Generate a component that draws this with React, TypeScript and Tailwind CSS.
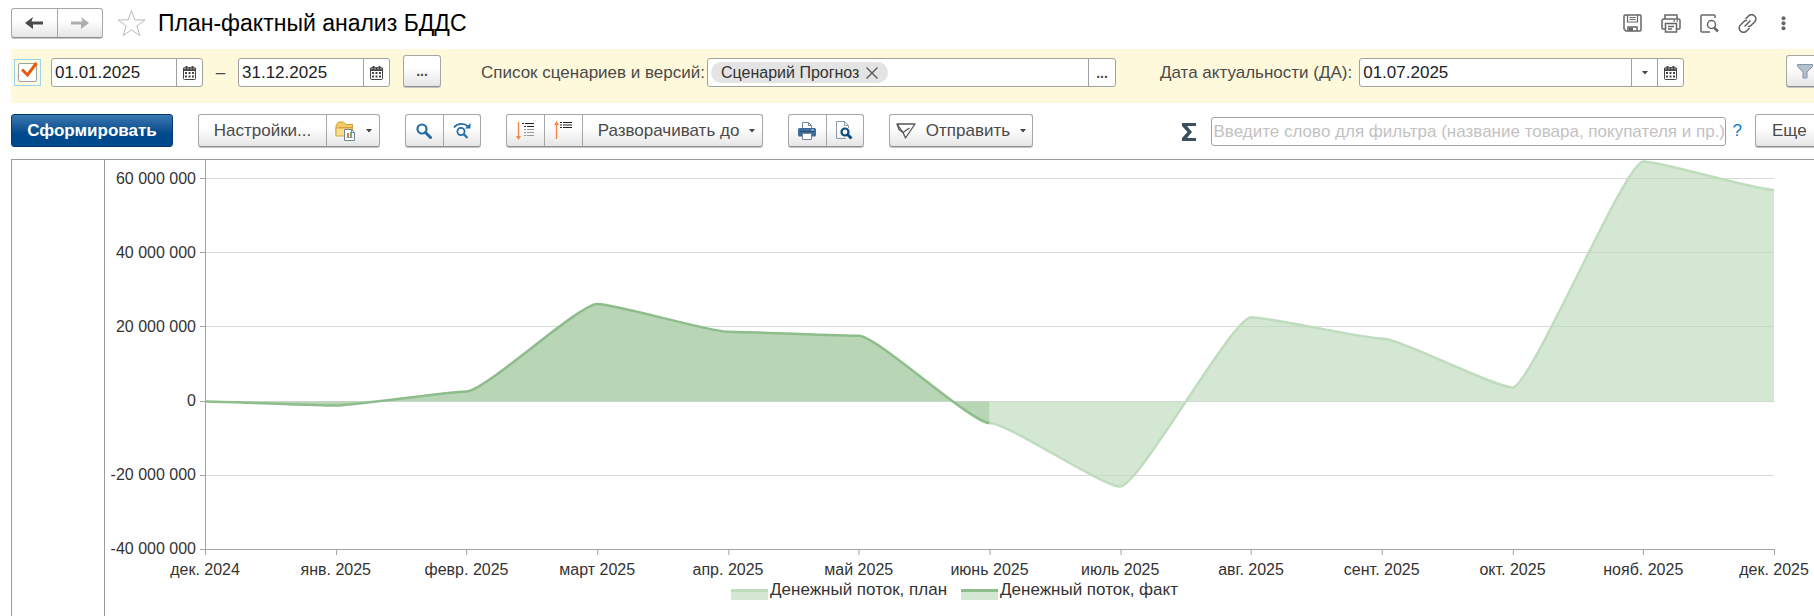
import type { ReactNode } from "react";

const months = [
  "дек. 2024",
  "янв. 2025",
  "февр. 2025",
  "март 2025",
  "апр. 2025",
  "май 2025",
  "июнь 2025",
  "июль 2025",
  "авг. 2025",
  "сент. 2025",
  "окт. 2025",
  "нояб. 2025",
  "дек. 2025",
];

const ticks = [
  "60 000 000",
  "40 000 000",
  "20 000 000",
  "0",
  "-20 000 000",
  "-40 000 000",
];

// millions, one value per month
const plan = [0, -1.1, 2.7, 26.3, 18.8, 17.7, -5.8, -22.9, 22.7, 17, 3.8, 64.7, 57];
const fact = plan.slice(0, 7);

const W = 1568;
const H = 390;
const STEP = W / 12;
const py = (v: number) => 241.5 - v * 3.71;
const gridY = (i: number) => Math.round(18 + i * 74.2) + 0.5;

const curve = (values: number[]) =>
  values
    .map((v, i) => {
      if (i === 0) return `M0 ${py(v)}`;
      const x = i * STEP;
      const k = STEP * 0.14;
      return `C${x - STEP + k} ${py(values[i - 1])} ${x - k} ${py(v)} ${x} ${py(v)}`;
    })
    .join("");

const area = (values: number[]) => `${curve(values)}V${py(0)}H0Z`;

const Calendar = () => (
  <svg width="13" height="14" viewBox="0 0 13 14">
    <path d="M1.5 1.5h10a1 1 0 0 1 1 1v10a1 1 0 0 1-1 1h-10a1 1 0 0 1-1-1v-10a1 1 0 0 1 1-1Z" fill="#fff" stroke="#444" />
    <path d="M0 2h13v3H0ZM2.5 0h2v3h-2ZM8.5 0h2v3h-2Z" fill="#444" />
    <path d="M2 1.5v2M5 1.5v2M8 1.5v2M11 1.5v2" stroke="#fff" strokeWidth="0.7" />
    <path d="M2 6h2v2H2ZM5.5 6h2v2h-2ZM9 6h2v2H9ZM2 9.5h2v2H2ZM5.5 9.5h2v2h-2ZM9 9.5h2v2H9Z" fill="#444" />
  </svg>
);

const Caret = () => (
  <svg width="6" height="4" viewBox="0 0 6 4">
    <path d="M0 0h6L3 3.5Z" fill="#444" />
  </svg>
);

const Dots = () => <span className="text-sm font-bold">...</span>;

const Folder = () => (
  <svg width="21" height="20" viewBox="0 0 21 20">
    <path d="M1 4.5 3.5 1h5L11 3.5h6.5v3H4L1 14Z" fill="#f3cd63" stroke="#d09a35" />
    <path d="M1 14V7h16.5v8H1Z" fill="#fbdf8c" stroke="#d9a640" />
    <path d="M9.5 8.5h7l3 3v8h-10Z" fill="#fff" stroke="#71849a" />
    <path d="M16.5 8.5v3h3" fill="none" stroke="#71849a" />
    <path d="M13 12v4" stroke="#e23b2e" strokeWidth="1.5" />
    <path d="M16 11v5" stroke="#2f9e44" strokeWidth="1.5" />
    <path d="M11.5 16.5h6" stroke="#999" />
  </svg>
);

const Search = () => (
  <svg width="16" height="16" viewBox="0 0 16 16" fill="none" stroke="#226da4">
    <circle cx="6" cy="6" r="4.5" strokeWidth="2.2" />
    <path d="m9.5 9.5 5 5" strokeWidth="3" strokeLinecap="round" />
  </svg>
);

const SearchNext = () => (
  <svg width="18" height="17" viewBox="0 0 18 17" fill="none" stroke="#226da4">
    <path d="M1 5.5C4 1 11 .5 15 4.5" strokeWidth="1.8" />
    <path d="M17.5 1v5.5H12Z" fill="#226da4" stroke="none" />
    <circle cx="8" cy="9.5" r="3.6" strokeWidth="1.8" />
    <path d="m10.8 12.3 3.7 3.7" strokeWidth="2.2" />
  </svg>
);

const Expand = () => (
  <svg width="19" height="19" viewBox="0 0 19 19">
    <path d="M2.5 1v15" stroke="#f58549" strokeWidth="1.4" />
    <path d="M0 15h5l-2.5 4Z" fill="#f58549" />
    <path d="M6 2.5h2M9 2.5h9M8 5.5h2M11 5.5h7" stroke="#222" />
    <path d="M8 8.5h2M11 8.5h7M8 11.5h2M11 11.5h7M8 14.5h2M11 14.5h7" stroke="#999" />
  </svg>
);

const Collapse = () => (
  <svg width="19" height="19" viewBox="0 0 19 19">
    <path d="M2.5 3v15" stroke="#f58549" strokeWidth="1.4" />
    <path d="M0 4h5L2.5 0Z" fill="#f58549" />
    <path d="M6 1.5h2M9 1.5h9M6 4h2M9 4h9M6 6.5h2M9 6.5h9" stroke="#222" />
  </svg>
);

const Printer = () => (
  <svg width="18" height="18" viewBox="0 0 18 18">
    <path d="M4.5 7V.5h6l3 3V7" fill="#fff" stroke="#71849a" />
    <path d="M10.5.5v3h3" fill="none" stroke="#71849a" />
    <rect y="6" width="18" height="8.5" rx="1.5" fill="#3f6c99" />
    <path d="M2 9.5h14" stroke="#274e77" />
    <path d="M13.5 8h2" stroke="#fff" />
    <path d="M4.5 11.5h9v6h-9Z" fill="#fff" stroke="#71849a" />
  </svg>
);

const Preview = () => (
  <svg width="17" height="19" viewBox="0 0 17 19" fill="none">
    <path d="M10 17.5H.5V.5h8l4 4V7" stroke="#8a9bae" />
    <path d="M8.5.5v4h4" stroke="#8a9bae" />
    <circle cx="9" cy="11" r="3.5" stroke="#0d4c80" strokeWidth="2.2" />
    <path d="m11.5 13.5 4 4" stroke="#0d4c80" strokeWidth="3" />
  </svg>
);

const Send = () => (
  <svg width="20" height="16" viewBox="0 0 20 16" fill="none" stroke="#555" strokeWidth="1.3" strokeLinejoin="round">
    <path d="M1 1h18L9.5 15 7 9.5Z" />
    <path d="m1 1 2 5.5 4 3L13.5 5" />
  </svg>
);

const Btn = ({ label, className = "", children }: { label?: string; className?: string; children: ReactNode }) => (
  <button type="button" aria-label={label} className={`flex h-full items-center justify-center ${className}`}>
    {children}
  </button>
);

const Group = ({ className = "", children }: { className?: string; children: ReactNode }) => (
  <div
    className={`flex shrink-0 divide-x divide-[#a6a6a6] rounded-[3px] border border-[#a6a6a6] border-b-[#8f8f8f] bg-linear-to-b from-white from-40% to-[#e6e6e6] shadow-[0_1px_0_#c4c4c4] ${className}`}
  >
    {children}
  </div>
);

const DateField = ({ label, value }: { label: string; value: string }) => (
  <div className="flex h-[29px] w-[152px] shrink-0 rounded-[3px] border border-[#a0a0a0] bg-white">
    <input aria-label={label} defaultValue={value} className="w-0 flex-1 pl-[3px] text-[#222] outline-none" />
    <Btn label="Календарь" className="w-[26px] border-l border-[#a0a0a0]">
      <Calendar />
    </Btn>
  </div>
);

const Header = () => (
  <header className="flex h-[41px] items-center pt-[5px] pl-[11px]">
    <Group className="h-[30px] w-[92px]">
      <Btn label="Назад" className="flex-1">
        <svg width="18" height="12" viewBox="0 0 18 12">
          <path d="M18 4.5v3H8V12L0 6l8-6-1.5 4.5Z" fill="#4a4a4a" />
        </svg>
      </Btn>
      <Btn label="Вперед" className="flex-1">
        <svg width="18" height="12" viewBox="0 0 18 12">
          <path d="M0 4.5v3h10V12l8-6-8-6 1.5 4.5Z" fill="#adadad" />
        </svg>
      </Btn>
    </Group>
    <button type="button" aria-label="В избранное" className="ml-3.5">
      <svg width="29" height="28" viewBox="0 0 29 28">
        <path d="m14.5 1.5 3.3 9.3 10.2.2-8.2 6 3 9.7-8.3-5.9-8.3 5.9 3-9.7-8.2-6 10.2-.2Z" fill="#fff" stroke="#b4bac1" />
      </svg>
    </button>
    <h1 className="ml-3 text-[23px] leading-7 whitespace-nowrap text-black">План-фактный анализ БДДС</h1>
    <div className="ml-auto flex items-center gap-[19px] pr-6 text-[#666]">
      <button type="button" aria-label="Сохранить">
        <svg width="19" height="18" viewBox="0 0 19 18" fill="none" stroke="currentColor" strokeWidth="1.5">
          <path d="M1 2a1 1 0 0 1 1-1h15a1 1 0 0 1 1 1v14a1 1 0 0 1-1 1H3l-2-2Z" />
          <path d="M4.5 1v7h10V1M6.5 3.5h6M6.5 5.5h6" strokeWidth="1.2" />
          <path d="M5 17v-4h9v4" />
          <path d="M6 13.5h4V17H6Z" fill="currentColor" stroke="none" />
        </svg>
      </button>
      <button type="button" aria-label="Печать">
        <svg width="20" height="19" viewBox="0 0 20 19" fill="none" stroke="currentColor" strokeWidth="1.5">
          <path d="M4 5V1h12v4M4.5 15H2a1 1 0 0 1-1-1V6.5A1.5 1.5 0 0 1 2.5 5h15A1.5 1.5 0 0 1 19 6.5V14a1 1 0 0 1-1 1h-2.5" />
          <path d="M4.5 9.5h11V18h-11ZM7 12.5h6M7 15h4M12.5 7H14M15.5 7H17" />
        </svg>
      </button>
      <button type="button" aria-label="Просмотр">
        <svg width="19" height="19" viewBox="0 0 19 19" fill="none" stroke="currentColor" strokeWidth="1.5">
          <path d="M10 18H2a1 1 0 0 1-1-1V2a1 1 0 0 1 1-1h12a1 1 0 0 1 1 1v2" />
          <circle cx="11.5" cy="10.5" r="4" />
          <path d="m14 13.5 4 4" strokeWidth="2.5" />
        </svg>
      </button>
      <button type="button" aria-label="Ссылка">
        <svg width="19" height="19" viewBox="0 0 19 19" fill="none" stroke="currentColor" strokeWidth="1.6" strokeLinecap="round">
          <path d="M8 4.5 10.5 2a4 4 0 0 1 6 0 4 4 0 0 1 0 6L13 11.5a3.5 3.5 0 0 1-2.5 1" />
          <path d="M11 14.5 8.5 17a4 4 0 0 1-6 0 4 4 0 0 1 0-6L6 7.5a3.5 3.5 0 0 1 2.5-1M7 12l5-5" />
        </svg>
      </button>
      <button type="button" aria-label="Меню" className="flex w-3.5 justify-center">
        <svg width="5" height="15" viewBox="0 0 5 15" fill="currentColor">
          <circle cx="2.5" cy="2.3" r="2" />
          <circle cx="2.5" cy="7.3" r="2" />
          <circle cx="2.5" cy="12.3" r="2" />
        </svg>
      </button>
    </div>
  </header>
);

const Filters = () => (
  <div className="mt-2 ml-[11px] flex h-[54px] items-start bg-[#fff9db] pt-[9px] pl-[3px] whitespace-nowrap">
    <label className="relative mt-px flex size-[27px] shrink-0 items-center justify-center border border-[#9bd3ee]">
      <input type="checkbox" aria-label="Период" defaultChecked className="size-[19px] appearance-none rounded-[2px] border border-[#a0a0a0] bg-white" />
      <svg width="17" height="16" viewBox="0 0 17 16" className="pointer-events-none absolute top-[2px] left-[6px]">
        <path d="m1 7.5 5.5 5.5L15.5 1" fill="none" stroke="#e8590c" strokeWidth="3" />
      </svg>
    </label>
    <div className="ml-2.5">
      <DateField label="Начало периода" value="01.01.2025" />
    </div>
    <span className="w-[35px] text-center leading-[29px]">–</span>
    <DateField label="Конец периода" value="31.12.2025" />
    <Group className="-mt-[3px] ml-[13px] h-[32px] w-[38px]">
      <Btn label="Выбрать период" className="flex-1">
        <Dots />
      </Btn>
    </Group>
    <label htmlFor="scenario" className="ml-10 leading-[29px]">Список сценариев и версий:</label>
    <div className="ml-[2px] flex h-[29px] w-[409px] items-center rounded-[3px] border border-[#a0a0a0] bg-white">
      <span className="ml-[3px] flex h-[21px] items-center gap-[7px] rounded-full bg-[#e4e4e4] pr-2.5 pl-2.5 text-[16px] text-[#333]">
        Сценарий Прогноз
        <button type="button" aria-label="Убрать">
          <svg width="12" height="12" viewBox="0 0 12 12">
            <path d="m.5.5 11 11m0-11-11 11" stroke="#555" strokeWidth="1.3" />
          </svg>
        </button>
      </span>
      <input id="scenario" className="w-0 flex-1 outline-none" />
      <Btn label="Выбрать сценарий" className="w-[27px] border-l border-[#a0a0a0]">
        <Dots />
      </Btn>
    </div>
    <label htmlFor="actual" className="ml-11 leading-[29px]">Дата актуальности (ДА):</label>
    <div className="ml-[7px] flex h-[29px] w-[325px] rounded-[3px] border border-[#a0a0a0] bg-white">
      <input id="actual" defaultValue="01.07.2025" className="w-0 flex-1 pl-[3px] text-[#222] outline-none" />
      <Btn label="Список дат" className="w-[26px] border-l border-[#a0a0a0]">
        <Caret />
      </Btn>
      <Btn label="Календарь" className="w-[26px] border-l border-[#a0a0a0]">
        <Calendar />
      </Btn>
    </div>
    <Group className="-mt-[3px] -mr-2.5 ml-auto h-[32px] w-[38px]">
      <Btn label="Отбор" className="flex-1">
        <svg width="16" height="15" viewBox="0 0 16 15">
          <path d="M.5.5h15v2L10 8v6H6V8L.5 2.5Z" fill="#b3c0cc" stroke="#8595a5" />
        </svg>
      </Btn>
    </Group>
  </div>
);

const Toolbar = () => (
  <div className="mt-[11px] flex h-[33px] items-start pl-[11px] whitespace-nowrap">
    <button
      type="button"
      className="h-[33px] w-[162px] shrink-0 rounded-[3px] border border-[#053a6e] bg-linear-to-b from-[#3a78b0] to-[#00498c] to-60% font-bold text-white"
    >
      Сформировать
    </button>
    <Group className="ml-[25px] h-[33px] w-[182px]">
      <Btn className="flex-1">Настройки...</Btn>
      <Btn label="Варианты отчета" className="w-[52px] gap-2.5">
        <Folder />
        <Caret />
      </Btn>
    </Group>
    <Group className="ml-[25px] h-[33px] w-[76px]">
      <Btn label="Найти" className="flex-1"><Search /></Btn>
      <Btn label="Найти далее" className="flex-1"><SearchNext /></Btn>
    </Group>
    <Group className="ml-[25px] h-[33px] w-[257px]">
      <Btn label="Развернуть" className="w-[38px]"><Expand /></Btn>
      <Btn label="Свернуть" className="w-[38px]"><Collapse /></Btn>
      <Btn className="flex-1 gap-2.5 pl-2">
        Разворачивать до
        <Caret />
      </Btn>
    </Group>
    <Group className="ml-[25px] h-[33px] w-[76px]">
      <Btn label="Печать" className="flex-1"><Printer /></Btn>
      <Btn label="Просмотр" className="flex-1"><Preview /></Btn>
    </Group>
    <Group className="ml-[25px] h-[33px] w-[144px]">
      <Btn className="flex-1 gap-2.5">
        <Send />
        Отправить
        <Caret />
      </Btn>
    </Group>
    <svg width="14" height="18" viewBox="0 0 14 18" className="mt-[9px] ml-auto shrink-0">
      <path d="M0 0h14v3H5l5 6-5 6h9v3H0v-3l5.5-6L0 3Z" fill="#3c4f5f" />
    </svg>
    <input
      aria-label="Фильтр"
      placeholder="Введите слово для фильтра (название товара, покупателя и пр.)"
      className="mt-[3px] ml-[15px] h-[29px] w-[515px] rounded-[3px] border border-[#a0a0a0] bg-white pl-[2px] outline-none placeholder:text-[#c2c2c2]"
    />
    <a href="#help" className="ml-[7px] leading-[33px] text-[#0a7ac4]">?</a>
    <Group className="-mr-4 ml-[13px] h-[33px] w-[75px]">
      <Btn className="flex-1 justify-start pl-4">Еще</Btn>
    </Group>
  </div>
);

const LegendItem = ({ line, text }: { line: string; text: string }) => (
  <div className="flex items-center gap-[2px]">
    <span className={`mt-[9px] h-[11px] w-[37px] border-t-3 bg-[#d4e7d3] ${line}`}></span>
    {text}
  </div>
);

const Chart = () => (
  <div className="mt-3 ml-[11px] flex h-[457px] border-t border-l border-[#9a9a9a] text-[#333]">
    <div className="w-[93px] shrink-0 border-r border-[#9a9a9a]"></div>
    <div className="min-w-0 flex-1">
      <div className="flex h-[390px] pr-10 text-[16px]">
        <div className="flex w-[91px] shrink-0 flex-col justify-between pt-[18px]">
          {ticks.map((t) => (
            <div key={t} className="flex h-px items-center justify-end whitespace-nowrap">{t}</div>
          ))}
        </div>
        <svg viewBox={`-9 0 ${W + 9} ${H}`} preserveAspectRatio="none" className="h-[390px] w-0 flex-1 overflow-visible">
          {ticks.map((t, i) => (
            <path key={t} d={`M0 ${gridY(i)}H${W}`} stroke="#d9d9d9" />
          ))}
          <path d={area(plan)} fill="#b9d9b7" fillOpacity="0.62" clipPath="url(#rest)" />
          <path d={curve(plan)} fill="none" stroke="#bfdcbe" strokeWidth="2.5" clipPath="url(#rest)" />
          <path d={area(fact)} fill="#b0d0ae" fillOpacity="0.9" />
          <path d={curve(fact)} fill="none" stroke="#8ebd8c" strokeWidth="2.5" />
          {ticks.map((t, i) => (
            <path key={t} d={`M-5 ${gridY(i)}H0`} stroke="#a3a3a3" />
          ))}
          <path d={`M.5 0V389.5H${W}`} fill="none" stroke="#a3a3a3" />
          {months.map((m, i) => (
            <path key={m} d={`M${Math.round(i * STEP) + 0.5} 389V395`} stroke="#a3a3a3" />
          ))}
          <clipPath id="rest">
            <rect x={6 * STEP} y="0" width={6 * STEP + 1} height={H} />
          </clipPath>
        </svg>
      </div>
      <div className="mt-[10px] mr-10 ml-[100px] flex h-5 justify-between text-[16px]">
        {months.map((m) => (
          <div key={m} className="flex w-0 justify-center leading-5 whitespace-nowrap">{m}</div>
        ))}
      </div>
      <div className="flex justify-center gap-[14px] pr-2.5 leading-5">
        <LegendItem line="border-[#bfdcbe]" text="Денежный поток, план" />
        <LegendItem line="border-[#8ebd8c]" text="Денежный поток, факт" />
      </div>
    </div>
  </div>
);

const App = () => {
  return (
    <div className="overflow-hidden bg-white font-['Liberation_Sans',Arial,sans-serif] text-[17px] text-[#4a4a4a]">
      <Header />
      <Filters />
      <Toolbar />
      <Chart />
    </div>
  );
};

export default App;
